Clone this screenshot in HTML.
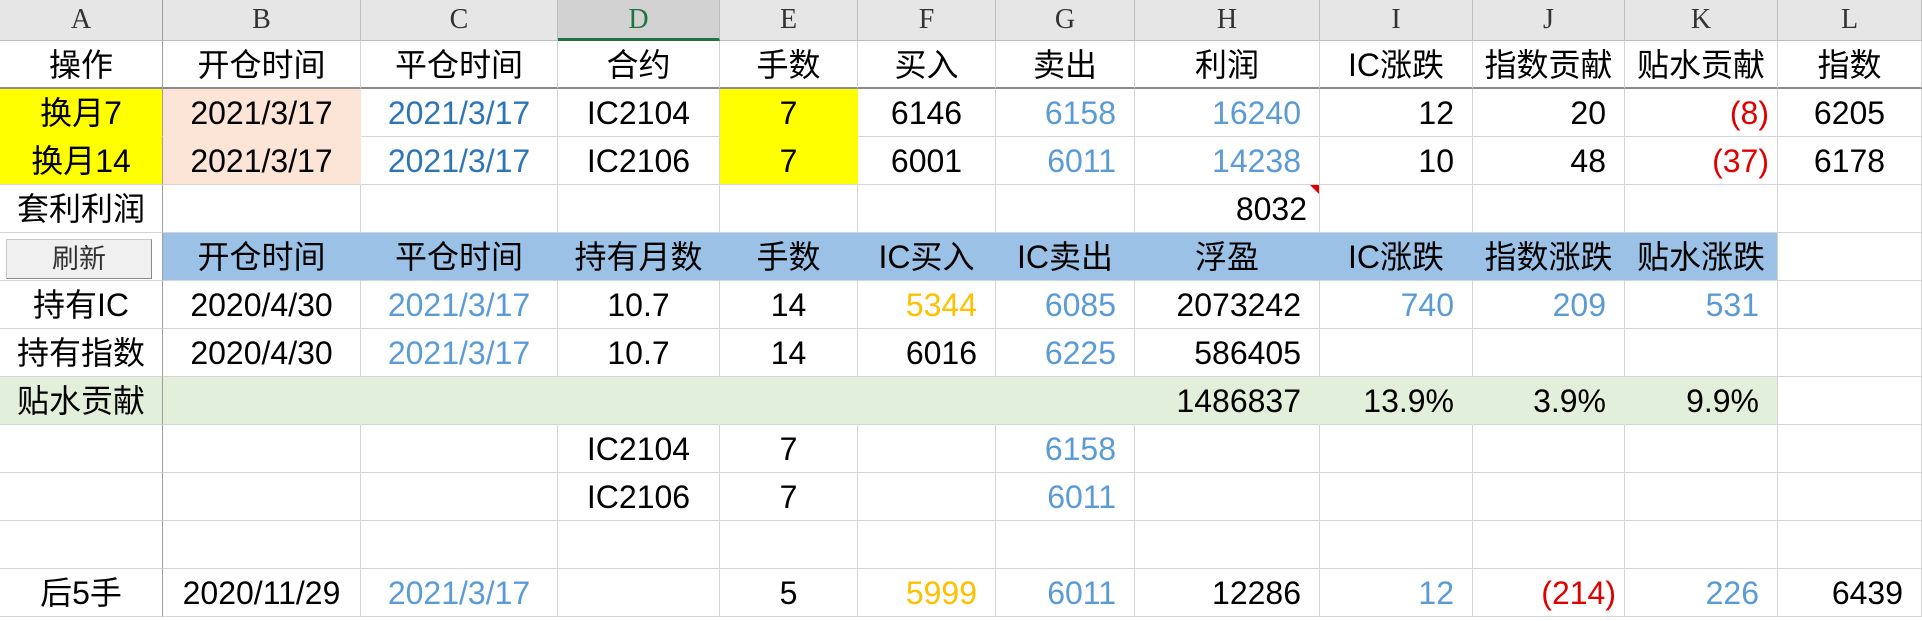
<!DOCTYPE html>
<html><head><meta charset="utf-8"><style>
body{margin:0;background:#fff;width:1922px;height:621px;overflow:hidden;}
.g{display:grid;grid-template-columns:163px 198px 197px 162px 138px 138px 139px 185px 153px 152px 153px 144px;grid-template-rows:41px repeat(12,48px);font-family:"Liberation Sans","Noto Sans CJK SC",sans-serif;font-size:32px;color:#000;}
.g>div{box-sizing:border-box;border-right:1px solid #d4d4d4;border-bottom:1px solid #d4d4d4;line-height:48px;white-space:nowrap;overflow:hidden;position:relative;}
.h{background:#e6e6e6;border-color:#bdbdbd!important;font-family:"Liberation Serif",serif;font-size:28px;color:#333;text-align:center;line-height:40px!important;}
.hs{background:#d2d2d2;color:#217346;border-bottom:3px solid #217346!important;}
.c{text-align:center}.r{text-align:right;padding-right:18px}.rn{text-align:right;padding-right:8px}
.lb{color:#5b9bd5}.db{color:#2e75b6}.red{color:#e00000}.or{color:#ffc000}
.y{background:#ffff00}.p{background:#fce4d6}.b{background:#9bc2e6;border-right-color:#9bc2e6!important}.gr{background:#e2efda;border-right-color:#e2efda!important}
.A{border-right:1px solid #9e9e9e!important}
.t{border-bottom:2px solid #8c8c8c!important}
.nb{border-bottom-color:transparent!important}
</style></head><body>
<div class="g">
<div class="h A">A</div><div class="h">B</div><div class="h">C</div><div class="h hs">D</div><div class="h">E</div><div class="h">F</div><div class="h">G</div><div class="h">H</div><div class="h">I</div><div class="h">J</div><div class="h">K</div><div class="h">L</div>

<div class="c A t">操作</div><div class="c t">开仓时间</div><div class="c t">平仓时间</div><div class="c t">合约</div><div class="c t">手数</div><div class="c t">买入</div><div class="c t">卖出</div><div class="c t">利润</div><div class="c t">IC涨跌</div><div class="c t">指数贡献</div><div class="c t">贴水贡献</div><div class="c t">指数</div>

<div class="c A y nb" style="border-bottom-color:#ff0!important">换月7</div><div class="c p" style="border-bottom-color:#fce4d6;border-right-color:#fce4d6">2021/3/17</div><div class="c db">2021/3/17</div><div class="c">IC2104</div><div class="c y" style="border-bottom-color:#ff0;border-right-color:#ff0">7</div><div class="c">6146</div><div class="r lb">6158</div><div class="r lb">16240</div><div class="r">12</div><div class="r">20</div><div class="rn red">(8)</div><div class="c">6205</div>

<div class="c A y">换月14</div><div class="c p" style="border-right-color:#fce4d6">2021/3/17</div><div class="c db">2021/3/17</div><div class="c">IC2106</div><div class="c y" style="border-right-color:#ff0">7</div><div class="c">6001</div><div class="r lb">6011</div><div class="r lb">14238</div><div class="r">10</div><div class="r">48</div><div class="rn red">(37)</div><div class="c">6178</div>

<div class="c A">套利利润</div><div></div><div></div><div></div><div></div><div></div><div></div><div class="r" style="padding-right:12px">8032<span style="position:absolute;right:0;top:0;width:0;height:0;border-left:9px solid transparent;border-top:9px solid #e00000"></span></div><div></div><div></div><div></div><div></div>

<div class="A" style="background:#fff"><span style="position:absolute;left:6px;top:6px;width:146px;height:40px;box-sizing:border-box;background:#f0f0f0;border:1px solid #c8c8c8;border-right-color:#8a8a8a;border-bottom-color:#8a8a8a;font-size:27px;color:#333;text-align:center;line-height:38px">刷新</span></div><div class="c b">开仓时间</div><div class="c b">平仓时间</div><div class="c b">持有月数</div><div class="c b">手数</div><div class="c b">IC买入</div><div class="c b">IC卖出</div><div class="c b">浮盈</div><div class="c b">IC涨跌</div><div class="c b">指数涨跌</div><div class="c b" style="border-right-color:#d4d4d4!important">贴水涨跌</div><div></div>

<div class="c A">持有IC</div><div class="c">2020/4/30</div><div class="c lb">2021/3/17</div><div class="c">10.7</div><div class="c">14</div><div class="r or">5344</div><div class="r lb">6085</div><div class="r">2073242</div><div class="r lb">740</div><div class="r lb">209</div><div class="r lb">531</div><div></div>

<div class="c A">持有指数</div><div class="c">2020/4/30</div><div class="c lb">2021/3/17</div><div class="c">10.7</div><div class="c">14</div><div class="r">6016</div><div class="r lb">6225</div><div class="r">586405</div><div></div><div></div><div></div><div></div>

<div class="c A gr">贴水贡献</div><div class="gr"></div><div class="gr"></div><div class="gr"></div><div class="gr"></div><div class="gr"></div><div class="gr"></div><div class="r gr">1486837</div><div class="r gr">13.9%</div><div class="r gr">3.9%</div><div class="r gr" style="border-right-color:#d4d4d4!important">9.9%</div><div></div>

<div class="A"></div><div></div><div></div><div class="c">IC2104</div><div class="c">7</div><div></div><div class="r lb">6158</div><div></div><div></div><div></div><div></div><div></div>

<div class="A"></div><div></div><div></div><div class="c">IC2106</div><div class="c">7</div><div></div><div class="r lb">6011</div><div></div><div></div><div></div><div></div><div></div>

<div class="A"></div><div></div><div></div><div></div><div></div><div></div><div></div><div></div><div></div><div></div><div></div><div></div>

<div class="c A">后5手</div><div class="c">2020/11/29</div><div class="c lb">2021/3/17</div><div></div><div class="c">5</div><div class="r or">5999</div><div class="r lb">6011</div><div class="r">12286</div><div class="r lb">12</div><div class="rn red">(214)</div><div class="r lb">226</div><div class="r">6439</div>
</div>
</body></html>
